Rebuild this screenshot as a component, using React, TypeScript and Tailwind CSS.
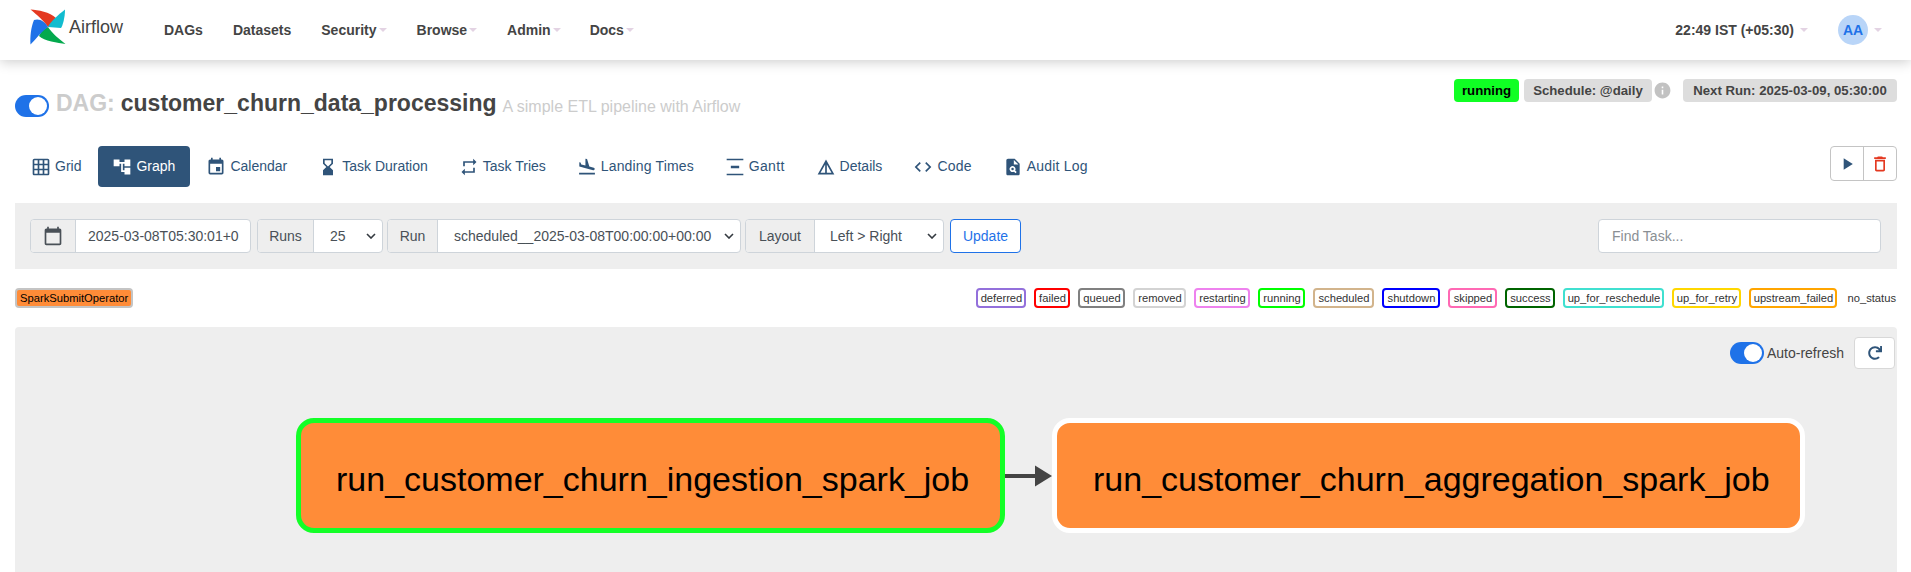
import React from "react";
import {
  MdGridOn, MdAccountTree, MdEvent, MdHourglassBottom, MdRepeat, MdFlightLand,
  MdVerticalDistribute, MdDetails, MdCode, MdPlagiarism, MdPlayArrow, MdDeleteOutline,
  MdInfo, MdCalendarToday,
} from "react-icons/md";
import { FaRedo } from "react-icons/fa";

const Caret = () => (
  <span className="ml-[2px] inline-block w-0 h-0 border-x-[4px] border-x-transparent border-t-[4px] border-t-[#e3d3e3]" />
);

const tabs = [
  { label: "Grid", Icon: MdGridOn, cls: "" },
  { label: "Graph", Icon: MdAccountTree, active: true, cls: "" },
  { label: "Calendar", Icon: MdEvent, cls: "" },
  { label: "Task Duration", Icon: MdHourglassBottom, cls: "" },
  { label: "Task Tries", Icon: MdRepeat, cls: "" },
  { label: "Landing Times", Icon: MdFlightLand, cls: "tracking-[0.15px]" },
  { label: "Gantt", Icon: MdVerticalDistribute, cls: "tracking-[0.3px]" },
  { label: "Details", Icon: MdDetails, cls: "" },
  { label: "Code", Icon: MdCode, cls: "tracking-[0.2px]" },
  { label: "Audit Log", Icon: MdPlagiarism, cls: "tracking-[0.2px]" },
];

const legend: [string, string][] = [
  ["deferred", "w-[50px] border-[#9370db]"],
  ["failed", "w-[36px] border-[#ff0000]"],
  ["queued", "w-[47px] border-[#808080]"],
  ["removed", "w-[53px] border-[#d3d3d3]"],
  ["restarting", "w-[56px] border-[#ee82ee]"],
  ["running", "w-[47px] border-[#00ff00]"],
  ["scheduled", "w-[61px] border-[#d2b48c]"],
  ["shutdown", "w-[58px] border-[#0000ff]"],
  ["skipped", "w-[49px] border-[#ff69b4]"],
  ["success", "w-[50px] border-[#006400]"],
  ["up_for_reschedule", "w-[101px] border-[#40e0d0]"],
  ["up_for_retry", "w-[69px] border-[#ffd700]"],
  ["upstream_failed", "w-[88px] border-[#ffa500]"],
];

const Toggle = () => (
  <span className="relative inline-block w-[34px] h-[22px] rounded-full bg-[#1f72e8] shrink-0">
    <span className="absolute right-[2px] top-[2px] w-[18px] h-[18px] rounded-full bg-white" />
  </span>
);

const Addon = ({ children, w }: { children: React.ReactNode; w: string }) => (
  <span className={`${w} h-full flex items-center justify-center bg-[#eeeeee] border-r border-[#ced4da] text-[#495057]`}>
    {children}
  </span>
);

const Selectish = ({ w, addon, addonW, text, pad }: { w: string; addon: string; addonW: string; text: string; pad: string }) => (
  <div className={`${w} h-[34px] flex items-center border border-[#ced4da] rounded-[4px] bg-white overflow-hidden`}>
    <Addon w={addonW}>{addon}</Addon>
    <span className={`flex-1 ${pad} text-[#495057]`}>{text}</span>
    <svg width="10" height="6" viewBox="0 0 10 6" className="mr-[6px]"><path d="M1 1l4 4 4-4" fill="none" stroke="#343a40" strokeWidth="1.6" /></svg>
  </div>
);

const Node = ({ border, w, pad, text }: { border: string; w: string; pad: string; text: string }) => (
  <div className={`${w} ${border} h-[115px] shrink-0 flex items-center ${pad} pt-[6px] rounded-[18px] border-[5px] bg-[#ff8c38] text-black text-[34px] leading-none`}>
    {text}
  </div>
);

export default function App() {
  return (
    <div className="w-[1911px] h-[572px] overflow-hidden bg-white text-[14px] text-[#444] [font-family:'Liberation_Sans',Arial,sans-serif]">
      <header className="h-[60px] flex items-center bg-white shadow-[0_2px_12px_rgba(0,0,0,0.2)] relative z-10 font-bold pl-[30px] pr-[29px]">
        <svg width="36" height="36" viewBox="0 0 36 36" className="shrink-0 -translate-y-[3px]">
          <path d="M0.5 0.5 C8 1 20 3 26 9 C25 14 22 17 18 18 C14 12 7 6 0.5 0.5Z" fill="#e43921" />
          <path d="M35 0.5 C35 8 33 16 31 19 L18 18 C20 13 28 6 35 0.5Z" fill="#11bccf" />
          <path d="M35.5 35 C28 34 14 32 9 27 C11 22 14 19 18 18 C22 24 29 30 35.5 35Z" fill="#04a94e" />
          <path d="M0.5 35.5 C0 28 1 18 4 11 C10 9 15 13 18 18 C11 23 6 30 0.5 35.5Z" fill="#1f72e8" />
        </svg>
        <span className="ml-[3px] w-[61px] text-[18px] font-normal -translate-y-[3px]">Airflow</span>
        <nav className="flex items-center ml-[34px] gap-[30px]">
          <span>DAGs</span>
          <span>Datasets</span>
          <span className="flex items-center">Security<Caret /></span>
          <span className="flex items-center">Browse<Caret /></span>
          <span className="flex items-center">Admin<Caret /></span>
          <span className="flex items-center -ml-[1px]">Docs<Caret /></span>
        </nav>
        <div className="ml-auto flex items-center">
          <span>22:49 IST (+05:30)</span>
          <span className="ml-[4px] flex"><Caret /></span>
          <span className="ml-[30px] w-[30px] h-[30px] rounded-full bg-[#b9d5f8] text-[#1f72e8] flex items-center justify-center">AA</span>
          <span className="ml-[4px] flex"><Caret /></span>
        </div>
      </header>

      <main className="pl-[15px] pr-[14px]">
        <div className="h-[86px] flex items-start justify-between pt-[19px] relative">
          <div className="flex items-center pt-[15px] h-[38px]">
            <Toggle />
            <span className="ml-[7px] text-[23px] font-bold text-[#cccccc] -translate-y-[2px]">DAG:</span>
            <span className="ml-[6px] text-[23px] font-bold text-[#444] -translate-y-[2px]">customer_churn_data_processing</span>
            <span className="ml-[6px] text-[16px] text-[#cccccc] translate-y-[1px]">A simple ETL pipeline with Airflow</span>
          </div>
          <div className="flex items-center font-bold h-[23px] text-[13.2px]">
            <span className="w-[65px] h-full flex items-center justify-center rounded-[4px] bg-[#10ff24] text-black">running</span>
            <span className="ml-[5px] w-[128px] h-full flex items-center justify-center rounded-[4px] bg-[#dddddd]">Schedule: @daily</span>
            <MdInfo className="ml-[1px] text-[#c2c2c2] text-[19px]" />
            <span className="ml-[11px] w-[214px] h-full flex items-center justify-center rounded-[4px] bg-[#dddddd]">Next Run: 2025-03-09, 05:30:00</span>
          </div>
        </div>

        <div className="h-[57px] flex items-start justify-between">
          <ul className="flex">
            {tabs.map(({ label, Icon, active, cls }) => (
              <li key={label} className={`ml-[2px] h-[41px] px-[15px] flex items-center rounded-[4px] ${cls} ${active ? "bg-[#2f5479] text-white" : "text-[#2f5479]"}`}>
                <Icon className="text-[20px] mr-[4px] -ml-[1px]" />
                {label}
              </li>
            ))}
          </ul>
          <div className="flex h-[35px] border border-[#c4c4c4] rounded-[4px]">
            <span className="w-[33px] flex items-center justify-center border-r border-[#c4c4c4] text-[#2f5479]"><MdPlayArrow className="text-[20px]" /></span>
            <span className="w-[32px] flex items-center justify-center text-[#e43921]"><MdDeleteOutline className="text-[20px]" /></span>
          </div>
        </div>

        <div className="h-[66px] bg-[#eeeeee] flex items-center pl-[15px] pr-[16px]">
          <div className="w-[221px] h-[34px] flex items-center border border-[#ced4da] rounded-[4px] bg-white overflow-hidden">
            <Addon w="w-[45px]"><MdCalendarToday className="text-[20px]" /></Addon>
            <span className="pl-[12px] text-[#495057] whitespace-nowrap">2025-03-08T05:30:01+0</span>
          </div>
          <div className="ml-[6px]"><Selectish w="w-[126px]" addon="Runs" addonW="w-[56px]" text="25" pad="pl-[16px]" /></div>
          <div className="ml-[4px]"><Selectish w="w-[354px]" addon="Run" addonW="w-[50px]" text="scheduled__2025-03-08T00:00:00+00:00" pad="pl-[16px]" /></div>
          <div className="ml-[4px]"><Selectish w="w-[199px]" addon="Layout" addonW="w-[69px]" text="Left > Right" pad="pl-[15px]" /></div>
          <span className="ml-[6px] w-[71px] h-[34px] flex items-center justify-center bg-white border border-[#1f72e8] rounded-[4px] text-[#1f72e8]">Update</span>
          <span className="ml-auto w-[283px] h-[34px] flex items-center pl-[13px] bg-white border border-[#ced4da] rounded-[4px] text-[#8a8f94]">Find Task...</span>
        </div>

        <div className="h-[58px] flex items-center justify-between text-[11.2px] text-[#333]">
          <span className="h-[20px] px-[3px] flex items-center bg-[#ff8c38] border-2 border-[#c4c4c4] rounded-[4px] text-black">SparkSubmitOperator</span>
          <div className="flex items-center gap-[8px]">
            {legend.map(([label, cls]) => (
              <span key={label} className={`h-[20px] flex items-center justify-center bg-white border-2 ${cls} rounded-[4px]`}>{label}</span>
            ))}
            <span className="ml-[2px] mr-[1px]">no_status</span>
          </div>
        </div>

        <section className="h-[300px] bg-[#eeeeee] rounded-[4px] flex flex-col">
          <div className="h-[91px] shrink-0 flex items-start justify-end pt-[10px] pr-[2px]">
            <div className="flex items-center h-[32px]">
              <Toggle />
              <span className="ml-[3px] text-[#444]">Auto-refresh</span>
              <span className="ml-[10px] w-[41px] h-[32px] flex items-center justify-center bg-white border border-[#d8d8d8] rounded-[4px] text-[#2f5479]"><FaRedo className="text-[14px]" /></span>
            </div>
          </div>
          <div className="flex items-center pl-[281px]">
            <Node border="border-[#13ff27]" w="w-[709px]" pad="pl-[35px]" text="run_customer_churn_ingestion_spark_job" />
            <svg width="47" height="24" viewBox="0 0 47 24" className="shrink-0">
              <path d="M0 12H32" stroke="#444" strokeWidth="4" />
              <path d="M30 1.5L47 12L30 22.5Z" fill="#444" />
            </svg>
            <Node border="border-white" w="w-[753px]" pad="pl-[36px]" text="run_customer_churn_aggregation_spark_job" />
          </div>
        </section>
      </main>
    </div>
  );
}
